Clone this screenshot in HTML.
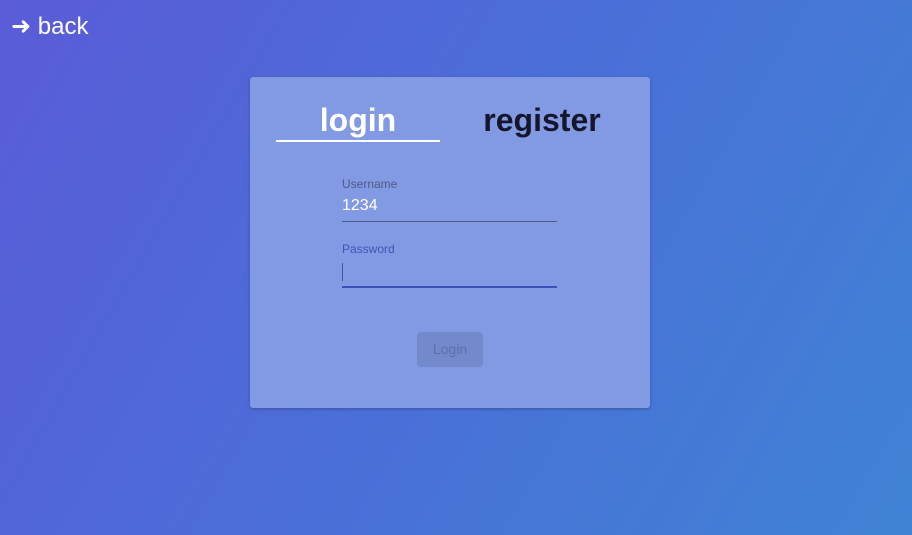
<!DOCTYPE html>
<html><head><style>
*{margin:0;padding:0;box-sizing:border-box}
body{width:912px;height:535px;overflow:hidden;font-family:"Liberation Sans",Roboto,sans-serif;background:linear-gradient(120deg,#5a5cd8 0%,#4a6fd8 50%,#4083d5 100%);position:relative}
.back{position:absolute;left:11px;top:12px;color:#fff;font-size:24px}
.card{position:absolute;left:250px;top:77px;width:400px;height:331px;background:#8299e3;border-radius:3px;box-shadow:0 1px 3px rgba(0,0,0,.25)}
.tab{position:absolute;top:25px;font-size:32px;font-weight:bold;text-align:center;width:164px}
.ul{position:absolute;left:26px;top:63px;width:164px;height:2px;background:#fff}
.lbl{position:absolute;left:92px;font-size:12px}
.line{position:absolute;left:92px;width:215px}
.btn{position:absolute;left:167px;top:255px;width:66px;height:35px;border-radius:4px;background:#7289cc;color:#5d6fa8;font-size:14px;text-align:center;line-height:35px}
</style></head><body>
<div class="back">➜ back</div>
<div class="card">
<div class="tab" style="left:26px;color:#fff">login</div>
<div class="tab" style="left:210px;color:#15162a">register</div>
<div class="ul"></div>
<div class="lbl" style="top:100px;color:#4f5a85">Username</div>
<div class="lbl" style="top:120px;font-size:16px;color:#fff">1234</div>
<div class="line" style="top:144px;height:1px;background:#4f5a85"></div>
<div class="lbl" style="top:165px;color:#4353b8">Password</div>
<div style="position:absolute;left:92px;top:186px;width:1px;height:18px;background:#3f51b5"></div>
<div class="line" style="top:209px;height:2px;background:#3f51b5"></div>
<div class="btn">Login</div>
</div>
</body></html>
